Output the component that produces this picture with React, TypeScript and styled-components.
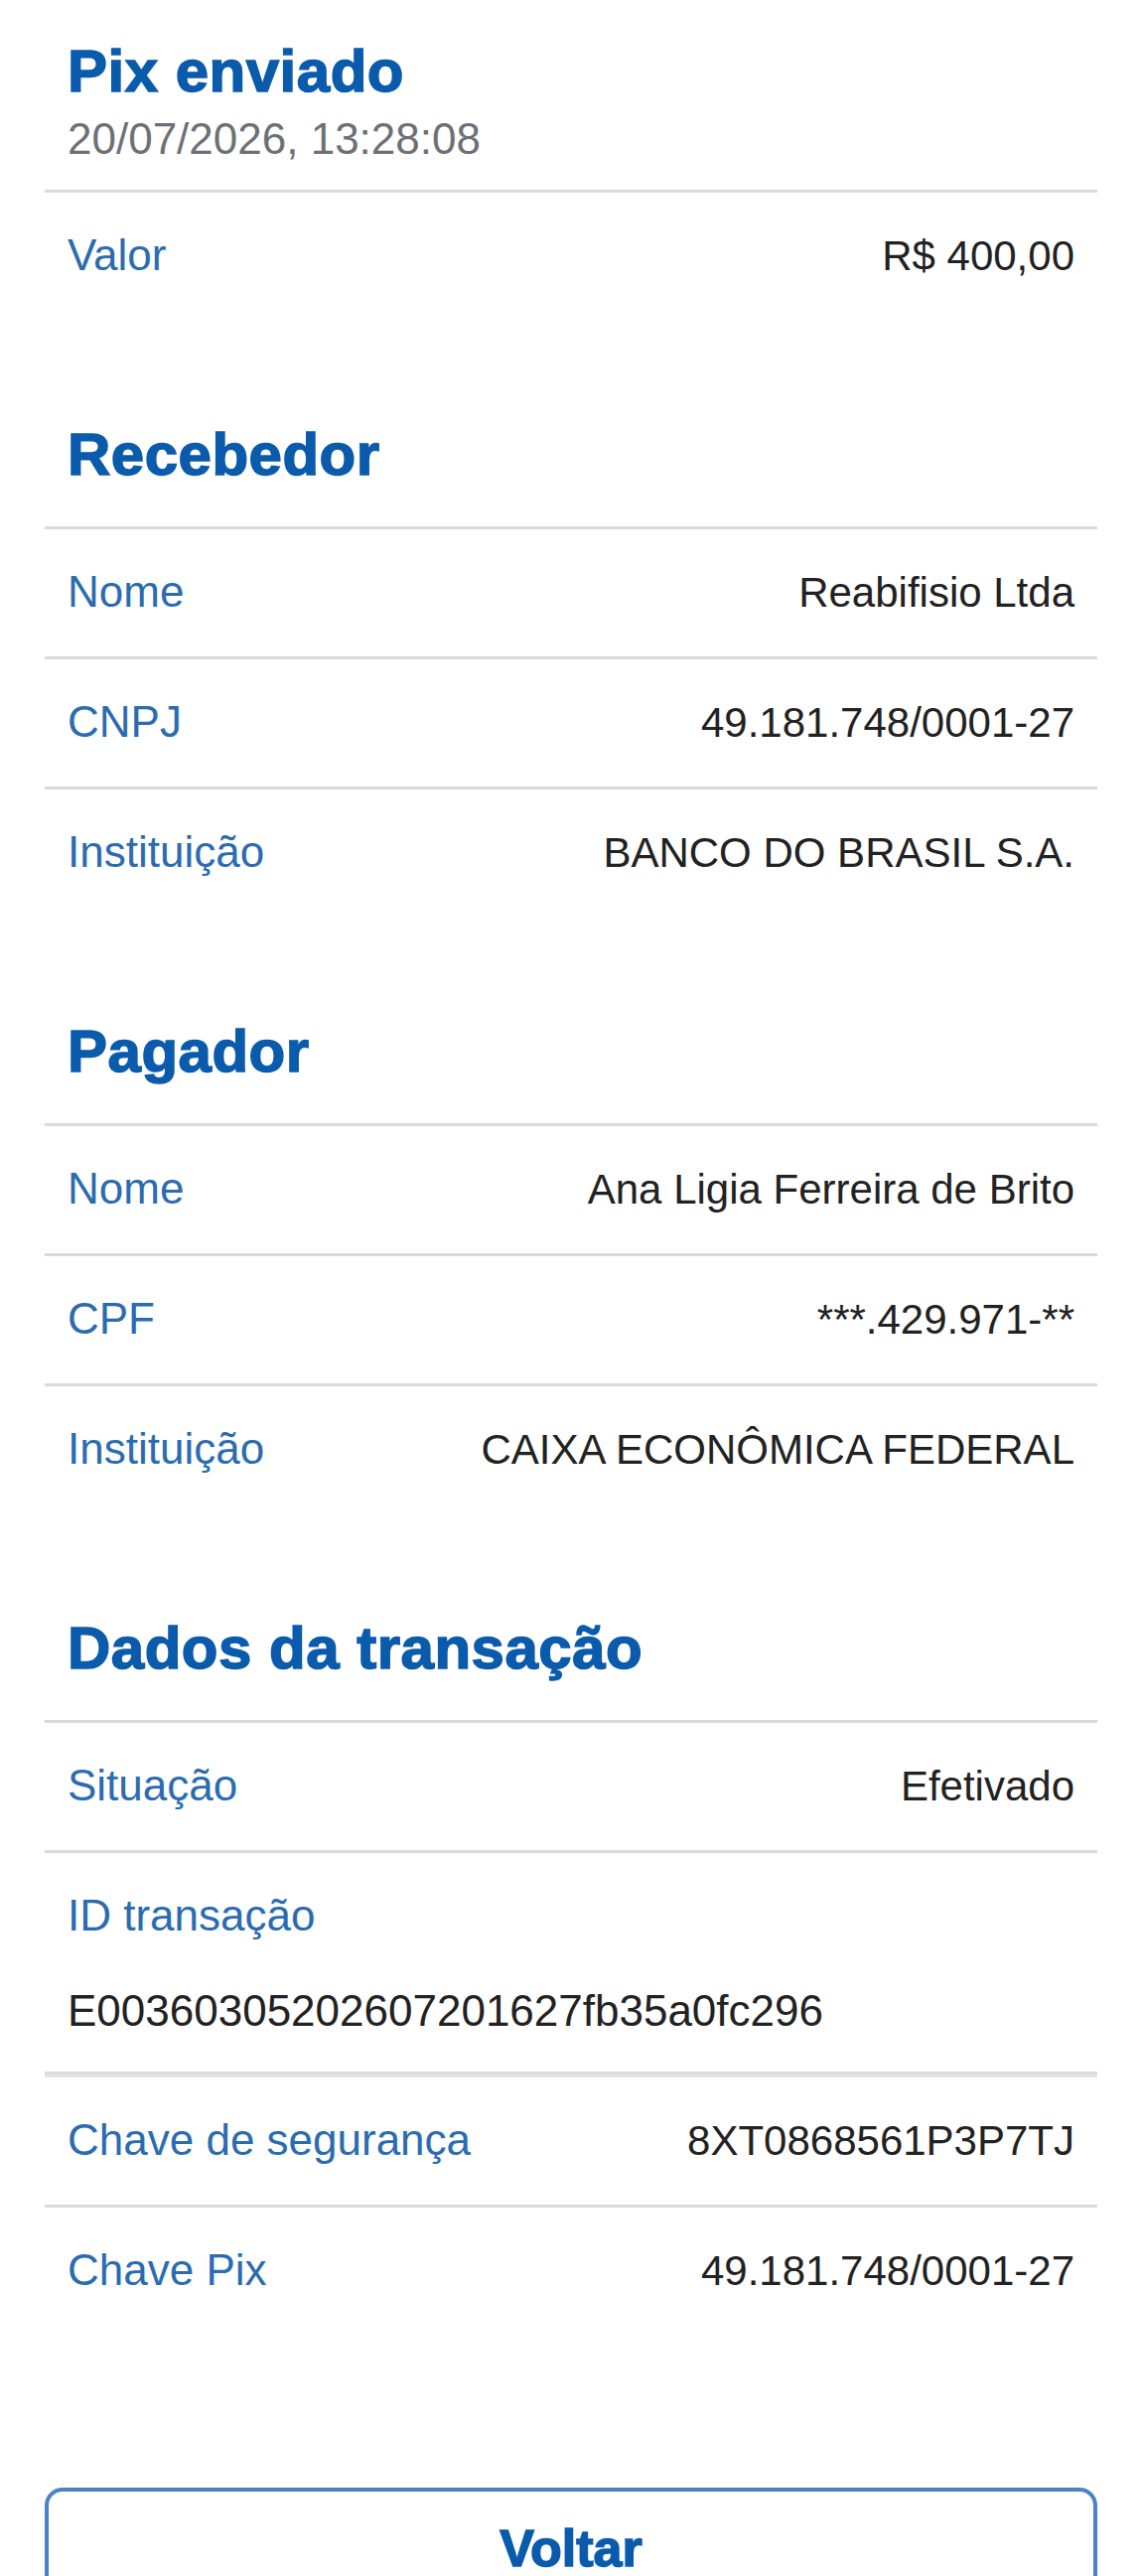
import styled, { createGlobalStyle } from 'styled-components'

type Item = {
  label: string
  value: string
  stacked?: boolean
}

type Section = {
  title: string
  items: Item[]
}

const sections: Section[] = [
  {
    title: 'Recebedor',
    items: [
      { label: 'Nome', value: 'Reabifisio Ltda' },
      { label: 'CNPJ', value: '49.181.748/0001-27' },
      { label: 'Instituição', value: 'BANCO DO BRASIL S.A.' },
    ],
  },
  {
    title: 'Pagador',
    items: [
      { label: 'Nome', value: 'Ana Ligia Ferreira de Brito' },
      { label: 'CPF', value: '***.429.971-**' },
      { label: 'Instituição', value: 'CAIXA ECONÔMICA FEDERAL' },
    ],
  },
  {
    title: 'Dados da transação',
    items: [
      { label: 'Situação', value: 'Efetivado' },
      {
        label: 'ID transação',
        value: 'E00360305202607201627fb35a0fc296',
        stacked: true,
      },
      { label: 'Chave de segurança', value: '8XT0868561P3P7TJ' },
      { label: 'Chave Pix', value: '49.181.748/0001-27' },
    ],
  },
]

export default function App() {
  return (
    <>
      <GlobalStyle />
      <Receipt>
        <Header>
          <Title>Pix enviado</Title>
          <DateText>20/07/2026, 13:28:08</DateText>
        </Header>
        <Row>
          <Label>Valor</Label>
          <Value>R$ 400,00</Value>
        </Row>

        {sections.map(section => (
          <Block key={section.title}>
            <SectionTitle>{section.title}</SectionTitle>
            {section.items.map(item =>
              item.stacked ? (
                <StackedRow key={item.label}>
                  <Label>{item.label}</Label>
                  <LongValue>{item.value}</LongValue>
                </StackedRow>
              ) : (
                <Row key={item.label}>
                  <Label>{item.label}</Label>
                  <Value>{item.value}</Value>
                </Row>
              ),
            )}
          </Block>
        ))}

        <BackButton type='button'>Voltar</BackButton>
      </Receipt>
    </>
  )
}

const GlobalStyle = createGlobalStyle`
  * {
    box-sizing: border-box;
  }
  body {
    margin: 0;
    background: #ffffff;
    font-family: "Liberation Sans", Arial, sans-serif;
  }
`

const Receipt = styled.main`
  display: flex;
  flex-direction: column;
  padding: 36px 45px 0;
`

const Header = styled.header`
  display: flex;
  flex-direction: column;
  gap: 6px;
  padding: 0 23px 25px;
`

const Title = styled.h1`
  margin: 0;
  font-size: 60px;
  line-height: 72px;
  font-weight: 700;
  letter-spacing: 0.5px;
  color: #0b5bad;
  -webkit-text-stroke: 1.5px #0b5bad;
`

const DateText = styled.div`
  font-size: 44px;
  line-height: 52px;
  color: #6d7176;
`

const Block = styled.section`
  display: flex;
  flex-direction: column;
  margin-top: 100px;
`

const SectionTitle = styled(Title).attrs({ as: 'h2' })`
  margin: 0 0 36px;
  padding: 0 23px;
`

const Row = styled.div`
  display: flex;
  justify-content: space-between;
  align-items: baseline;
  height: 131px;
  padding: 37px 23px 0;
  border-top: 3px solid #dadada;
`

const StackedRow = styled.div`
  display: flex;
  flex-direction: column;
  gap: 44px;
  padding: 37px 23px 35px;
  border-top: 3px solid #dadada;
  border-bottom: 3px solid #dcdcdc;

  & + ${Row} {
    border-top-color: #e4e4e4;
  }
`

const Label = styled.span`
  font-size: 44px;
  line-height: 52px;
  color: #2b6cb0;
`

const Value = styled.span`
  font-size: 42px;
  line-height: 52px;
  color: #222222;
  text-align: right;
`

const LongValue = styled.span`
  font-size: 44px;
  line-height: 52px;
  color: #222222;
`

const BackButton = styled.button`
  margin-top: 154px;
  height: 122px;
  width: 100%;
  border: 4px solid #4a82c3;
  border-radius: 18px;
  background: #ffffff;
  font-family: "Liberation Sans", Arial, sans-serif;
  font-size: 52px;
  font-weight: 700;
  color: #0b5bad;
  -webkit-text-stroke: 1.5px #0b5bad;
`
